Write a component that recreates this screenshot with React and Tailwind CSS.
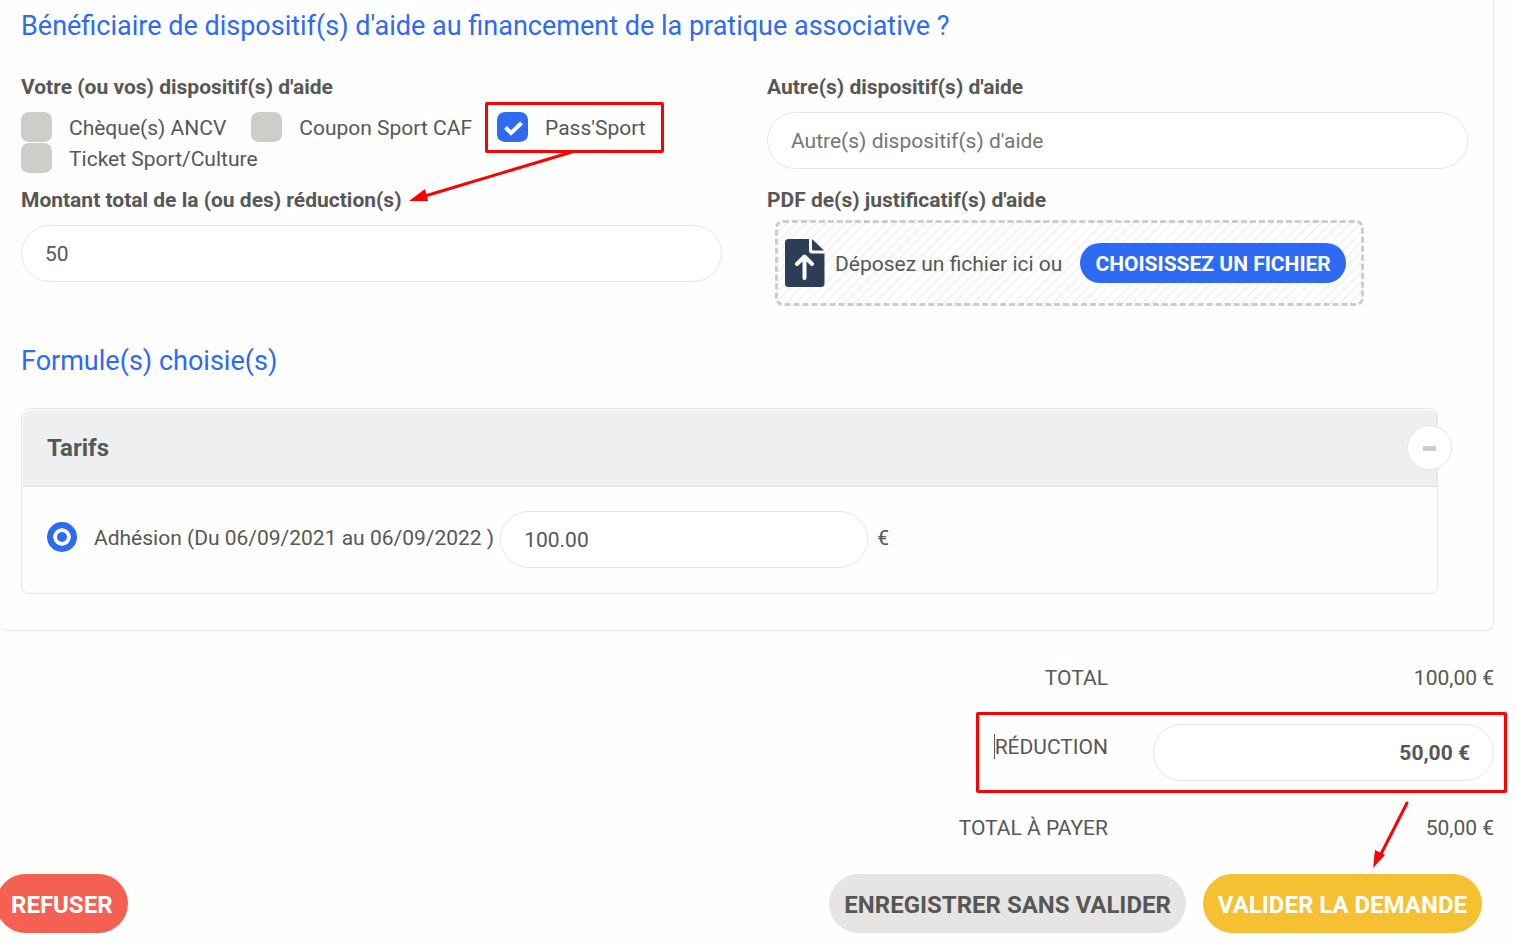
// ============================================================
// App.jsx — Membership request form: aid schemes, chosen
// plan, totals and the validation actions.
// ============================================================
import { useRef, useState } from 'react';
import clsx from 'clsx';

const AIDES = [
  { id: 'ancv', label: 'Chèque(s) ANCV' },
  { id: 'caf', label: 'Coupon Sport CAF' },
  { id: 'pass', label: "Pass'Sport", highlighted: true },
  { id: 'ticket', label: 'Ticket Sport/Culture' },
];

const FIELD =
  'h-[57px] rounded-full border border-[#e6e6e6] bg-white px-[23px] text-[#575756] outline-none placeholder:text-[#757575]';

/** Blue section heading */
function SectionTitle({ children }) {
  return <h2 className="text-[27px] leading-8 text-[#2f6af3]">{children}</h2>;
}

/** Red frame drawn around the parent element */
function Highlight({ className }) {
  return (
    <span
      className={clsx('pointer-events-none absolute rounded-xs border-3 border-[#fe0000]', className)}
    />
  );
}

/** Square tick box with its label */
function AideCheckbox({ aide, checked, onChange }) {
  return (
    <label className="relative flex h-[31px] items-center gap-[17px]">
      <span className="relative size-[31px] shrink-0">
        <input
          type="checkbox"
          checked={checked}
          onChange={onChange}
          className="block size-[31px] appearance-none rounded-lg border-b border-white bg-[#cecdc9] bg-clip-padding checked:bg-[#2f6af3]"
        />
        {checked && (
          <svg viewBox="0 0 31 31" className="pointer-events-none absolute inset-0">
            <path d="M8.500 15.500l5.500 5.500L24.500 11" fill="none" stroke="#fff" strokeWidth="4" />
          </svg>
        )}
      </span>
      <span className="pt-[2px]">{aide.label}</span>
      {aide.highlighted && (
        <>
          <Highlight className="-top-[10px] -right-[18px] -bottom-[10px] -left-3" />
          {/* arrow towards the amount field */}
          <svg
            viewBox="0 0 166 54"
            className="pointer-events-none absolute top-[38px] -left-[88px] h-[54px] w-[166px]"
          >
            <path d="M163 2L16 46" stroke="#fe0000" strokeWidth="3" />
            <path d="M0 51l16-12 3 12z" fill="#fe0000" />
          </svg>
        </>
      )}
    </label>
  );
}

/** Drop area for the PDF proof */
function FileDrop() {
  const inputRef = useRef(null);
  return (
    <div className="ml-2 flex h-[86px] w-fit items-center rounded-lg border-3 border-dashed border-[#cecdc9] bg-[repeating-linear-gradient(135deg,#fefefe_0px,#fefefe_5px,#ededeb_6px,#fefefe_7px)] pr-[15px] pl-[7px]">
      <svg viewBox="0 0 40 48" className="h-12 w-10 shrink-0">
        <path
          d="M3.500 0H24v11.500a3 3 0 0 0 3 3H39.500V44.500a3.500 3.500 0 0 1-3.500 3.500H3.500A3.500 3.500 0 0 1 0 44.500V3.500A3.500 3.500 0 0 1 3.500 0z"
          fill="#2c3e55"
        />
        <path d="M27 0l12 11.500H28.500a1.500 1.500 0 0 1-1.500-1.500z" fill="#2c3e55" />
        <path
          d="M19.500 39V18M12 25l7.500-7.500L27 25"
          fill="none"
          stroke="#fff"
          strokeWidth="4"
          strokeLinecap="round"
          strokeLinejoin="round"
        />
      </svg>
      <span className="ml-[10px] pt-[2px]">Déposez un fichier ici ou</span>
      <input ref={inputRef} id="justificatif" type="file" accept="application/pdf" className="hidden" />
      <button
        type="button"
        onClick={() => inputRef.current.click()}
        className="ml-[18px] h-10 rounded-full bg-[#2f6af3] px-[15px] pt-[2px] font-bold whitespace-nowrap text-white uppercase"
      >
        Choisissez un fichier
      </button>
    </div>
  );
}

/** Collapsible panel listing the plans */
function TarifsPanel() {
  const [open, setOpen] = useState(true);
  return (
    <div className="mr-[30px] rounded-lg border border-[#e6e6e6]">
      <div className="relative flex h-[78px] items-center rounded-t-lg border-t border-l border-b border-t-white border-l-white border-b-[#e1e2e3] bg-[#eeeff1] pl-6">
        <h3 className="text-2xl font-bold">Tarifs</h3>
        <button
          type="button"
          aria-label="Replier"
          onClick={() => setOpen(!open)}
          className="absolute top-[15px] -right-[15px] flex size-[45px] items-center justify-center rounded-full border border-[#e6e6e6] bg-white pt-[2px]"
        >
          <span className="h-[5px] w-[13px] bg-[#cecdc9]" />
        </button>
      </div>
      {open && (
        <div className="flex items-center px-[25px] pt-6 pb-[25px]">
          <label className="flex items-center gap-[17px] pb-[5px]">
            <input
              type="radio"
              name="tarif"
              defaultChecked
              className="size-[30px] appearance-none rounded-full border-6 border-[#2f6af3] bg-[#2f6af3] shadow-[inset_0_0_0_4px_white]"
            />
            <span className="pt-[2px]">Adhésion (Du 06/09/2021 au 06/09/2022 )</span>
          </label>
          <input
            aria-label="Montant de l'adhésion"
            defaultValue="100.00"
            className={clsx(FIELD, 'ml-[6px] w-[368px]')}
          />
          <span className="ml-[9px] pb-[2px]">€</span>
        </div>
      )}
    </div>
  );
}

/** Label / amount line of the summary */
function TotalRow({ label, value }) {
  return (
    <div className="flex gap-[45px] leading-8 uppercase">
      <span className="flex-1 text-right">{label}</span>
      <span className="w-[341px] text-right">{value}</span>
    </div>
  );
}

// ----------------------------------------------------------------
//  Page
// ----------------------------------------------------------------
export default function App() {
  const [selected, setSelected] = useState(['pass']);

  const toggle = (id) =>
    setSelected((prev) => (prev.includes(id) ? prev.filter((x) => x !== id) : [...prev, id]));

  return (
    <form className="overflow-hidden bg-[#fefefe] pr-[23px] pb-5 font-['Roboto',sans-serif] text-[21px] leading-[31px] text-[#575756]">
      <section className="rounded-b-lg border-r border-b border-[#e6e6e6] pt-[10px] pr-[25px] pb-9 pl-[21px]">
        <SectionTitle>Bénéficiaire de dispositif(s) d'aide au financement de la pratique associative ?</SectionTitle>

        <div className="mt-[30px] grid grid-cols-2 gap-x-[45px]">
          <fieldset className="min-w-0">
            <legend className="mb-[9px] font-bold">Votre (ou vos) dispositif(s) d'aide</legend>
            <div className="flex flex-wrap gap-x-[25px]">
              {AIDES.map((aide) => (
                <AideCheckbox
                  key={aide.id}
                  aide={aide}
                  checked={selected.includes(aide.id)}
                  onChange={() => toggle(aide.id)}
                />
              ))}
            </div>
          </fieldset>
          <div className="flex flex-col gap-[9px]">
            <label htmlFor="autre" className="font-bold">Autre(s) dispositif(s) d'aide</label>
            <input id="autre" placeholder="Autre(s) dispositif(s) d'aide" className={FIELD} />
          </div>
          <div className="mt-[11px] flex flex-col gap-[9px]">
            <label htmlFor="montant" className="font-bold">Montant total de la (ou des) réduction(s)</label>
            <input id="montant" defaultValue="50" className={FIELD} />
          </div>
          <div className="mt-[11px] flex flex-col gap-1">
            <label htmlFor="justificatif" className="font-bold">PDF de(s) justificatif(s) d'aide</label>
            <FileDrop />
          </div>
        </div>

        <div className="mt-[39px] mb-[31px]">
          <SectionTitle>Formule(s) choisie(s)</SectionTitle>
        </div>
        <TarifsPanel />
      </section>

      <div className="mt-[31px] flex flex-col">
        <TotalRow label="Total" value="100,00 €" />
        <div className="relative mt-[30px] flex gap-[45px]">
          <label htmlFor="reduction" className="flex flex-1 justify-end pt-[10px] leading-[27px] uppercase">
            <span className="h-[25px] border-l border-[#575756]">Réduction</span>
          </label>
          <input
            id="reduction"
            defaultValue="50,00 €"
            className={clsx(FIELD, 'w-[341px] text-right font-bold')}
          />
          <Highlight className="-top-3 -right-[13px] -bottom-3 w-[531px]" />
          {/* arrow towards the validation button */}
          <svg
            viewBox="0 0 38 68"
            className="pointer-events-none absolute top-[77px] right-[84px] h-[68px] w-[38px]"
          >
            <path d="M35 2L9 53" stroke="#fe0000" strokeWidth="3" strokeLinecap="round" />
            <path d="M1 67l2-18 10 5z" fill="#fe0000" />
          </svg>
        </div>
        <div className="mt-[31px]">
          <TotalRow label="Total à payer" value="50,00 €" />
        </div>
      </div>

      <div className="mt-[30px] -ml-1 flex items-center pr-3 text-[24px] font-bold">
        <button type="button" className="h-[59px] rounded-full bg-[#f46052] px-[15px] pt-[3px] text-white uppercase">
          Refuser
        </button>
        <button type="button" className="mr-[17px] ml-auto h-[59px] rounded-full bg-[#e6e5e3] px-[15px] pt-[3px] uppercase">
          Enregistrer sans valider
        </button>
        <button type="submit" className="h-[59px] rounded-full bg-[#f5c132] px-[15px] pt-[3px] text-white uppercase">
          Valider la demande
        </button>
      </div>
    </form>
  );
}
